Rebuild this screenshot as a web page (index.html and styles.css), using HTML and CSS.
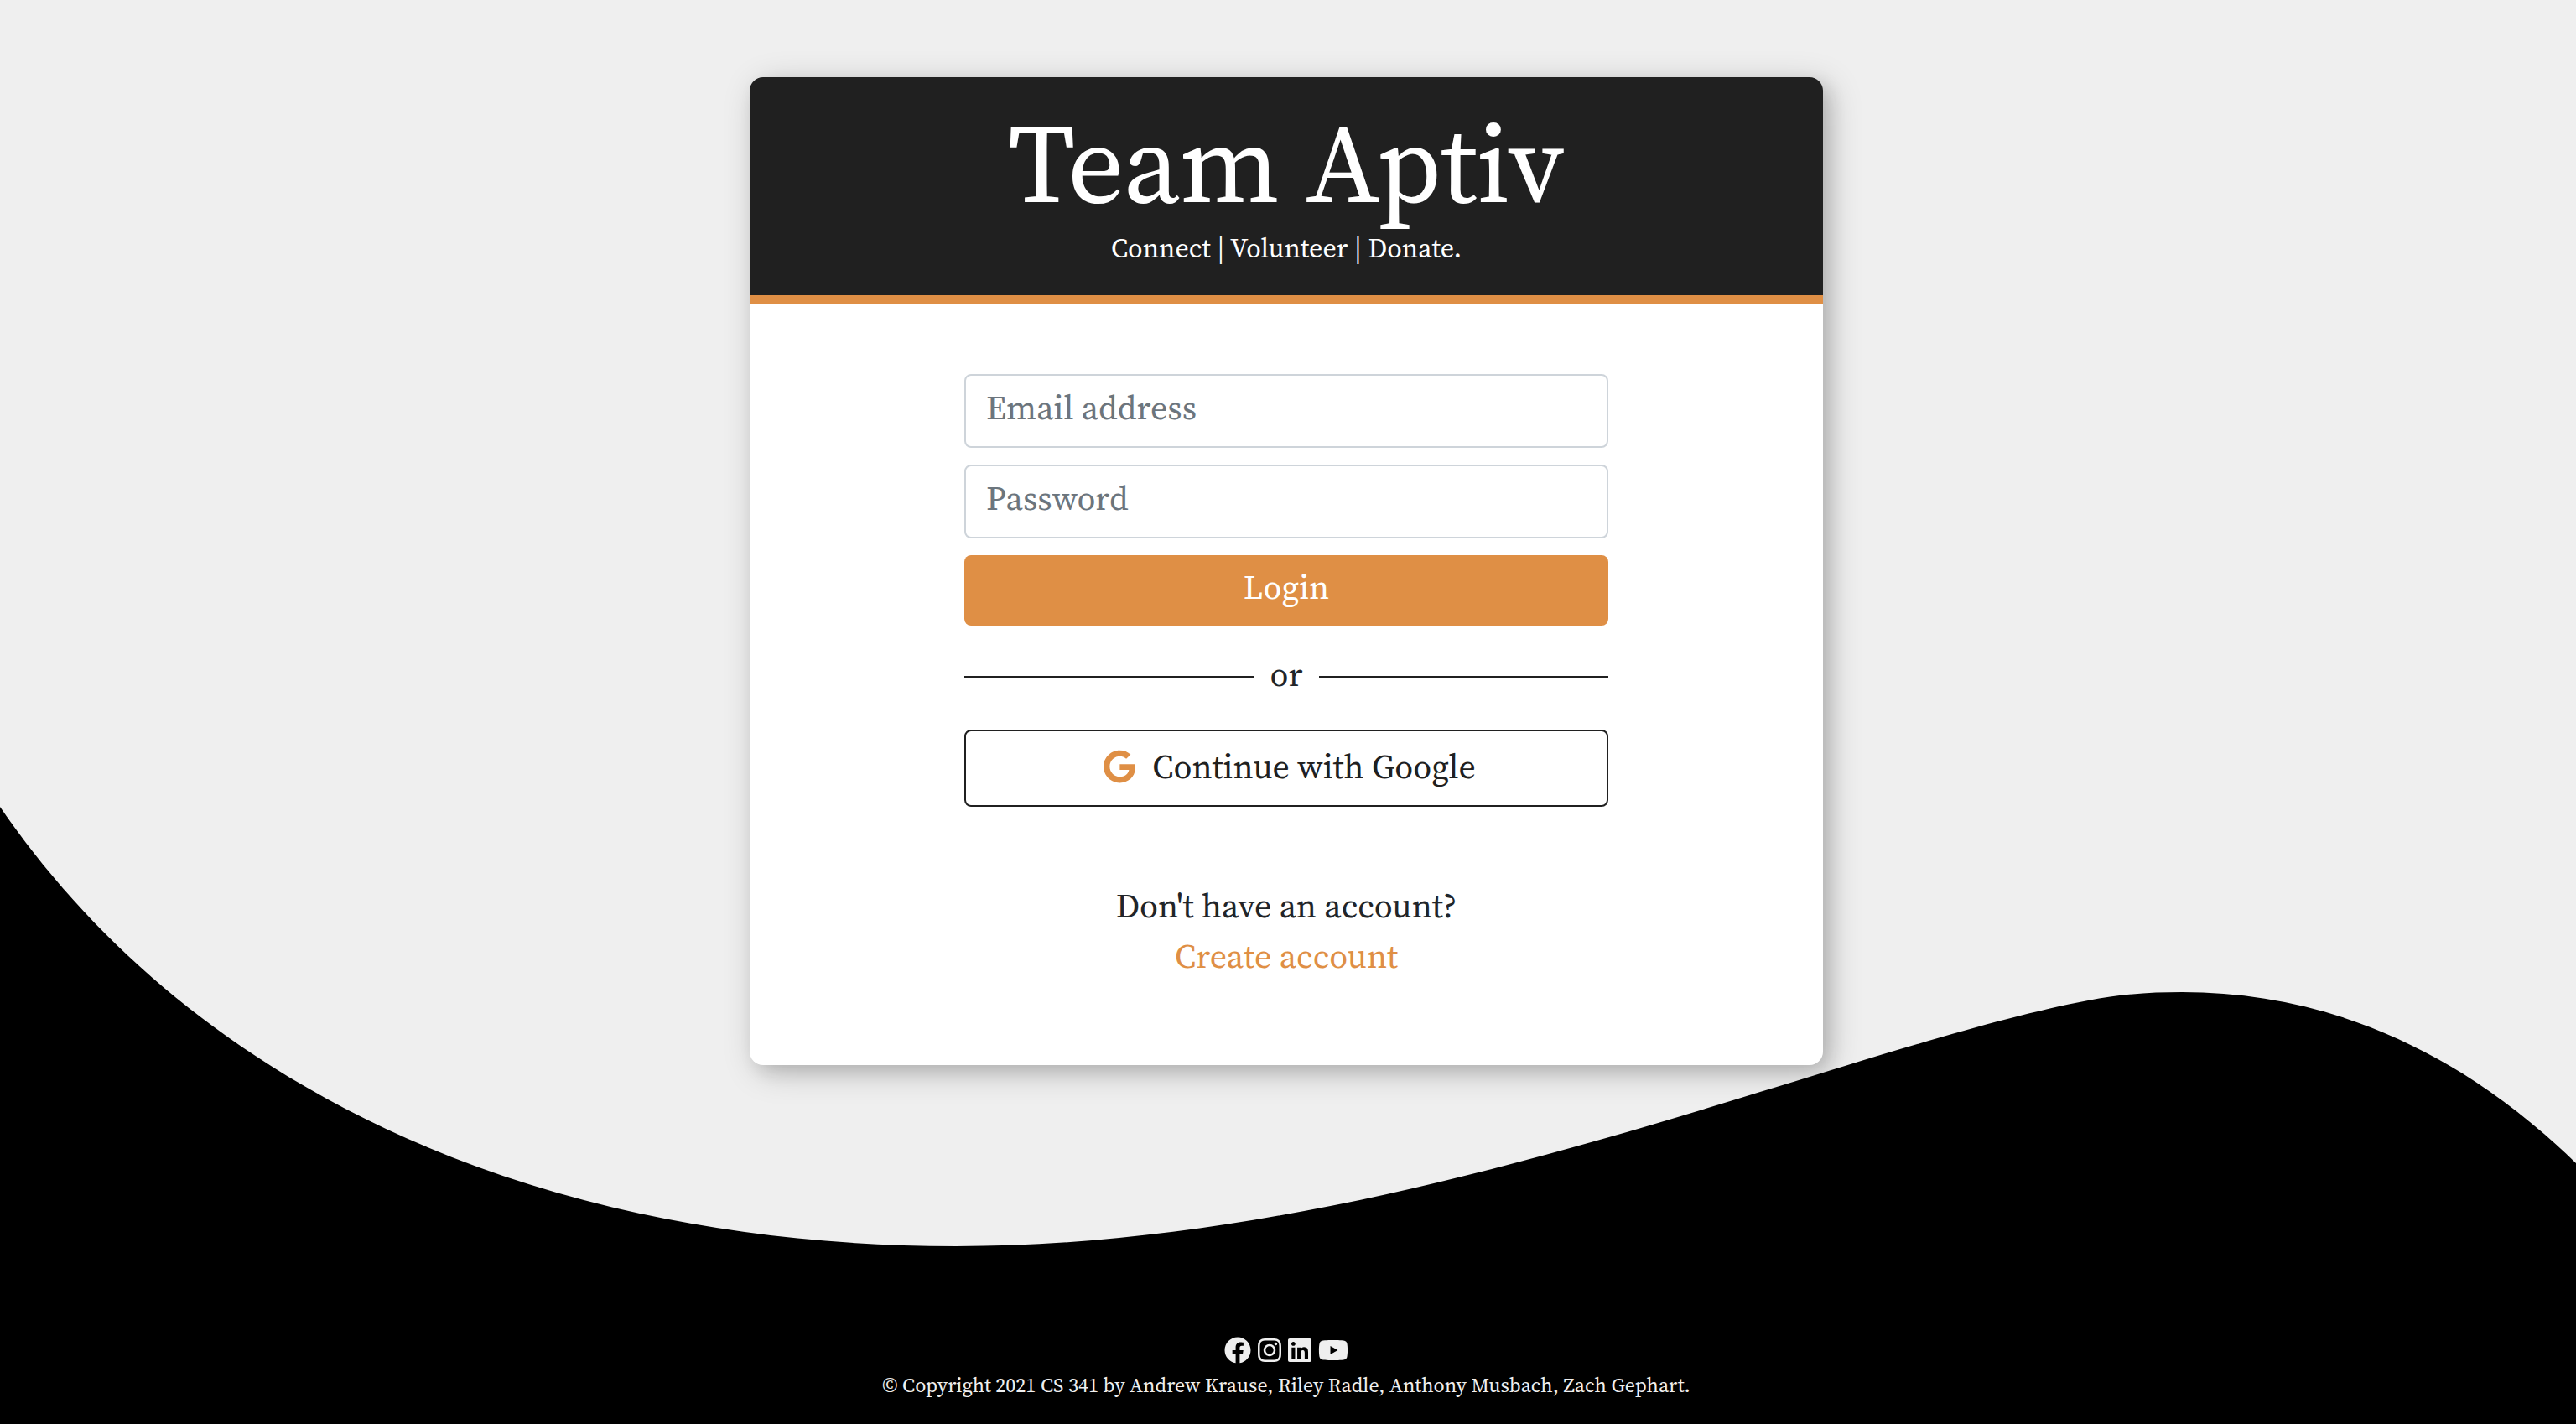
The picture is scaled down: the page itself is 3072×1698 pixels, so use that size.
FILE: index.html
```html
<!DOCTYPE html>
<html lang="en">
<head>
  <meta charset="utf-8">
  <meta name="viewport" content="width=device-width, initial-scale=1">
  <title>Team Aptiv</title>
  <link rel="stylesheet" href="styles.css">
</head>
<body>
  <svg class="wave" viewBox="0 948 3072 750" aria-hidden="true">
    <path d="M0 962C210 1269 597 1485 1140 1486C1670 1486 2190 1250 2490 1193C2530 1185 2565 1183 2602 1183C2774 1183 2932 1251 3072 1387V1698H0Z"/>
  </svg>

  <main class="card">
    <header class="card-header">
      <h1 class="brand">Team Aptiv</h1>
      <p class="tagline">Connect | Volunteer | Donate.</p>
    </header>

    <div class="card-body">
      <form class="login">
        <input class="field" type="email" placeholder="Email address" aria-label="Email address">
        <input class="field" type="password" placeholder="Password" aria-label="Password">
        <button class="btn btn-login" type="submit">Login</button>
      </form>

      <div class="divider"><span class="divider-text">or</span></div>

      <button class="btn btn-google" type="button">
        <svg class="google-icon" viewBox="0 0 488 512" aria-hidden="true"><path d="M488 261.800C488 403.300 391.100 504 248 504 110.800 504 0 393.200 0 256S110.800 8 248 8c66.800 0 123 24.500 166.300 64.900l-67.500 64.900C258.500 52.600 94.300 116.600 94.300 256c0 86.500 69.100 156.600 153.700 156.600 98.200 0 135-70.400 140.800-106.900H248v-85.300h236.100c2.300 12.700 3.900 24.900 3.900 41.400z"/></svg>
        <span>Continue with Google</span>
      </button>

      <div class="signup">
        <p class="signup-text">Don't have an account?</p>
        <a class="signup-link" href="#create">Create account</a>
      </div>
    </div>
  </main>

  <footer class="footer">
    <nav class="social" aria-label="Social media">
      <a href="#facebook" aria-label="Facebook"><svg viewBox="0 0 512 512"><path d="M504 256C504 119 393 8 256 8S8 119 8 256c0 123.780 90.690 226.380 209.250 245V327.690h-63V256h63v-54.640c0-62.150 37-96.480 93.670-96.480 27.140 0 55.520 4.840 55.520 4.840v61h-31.280c-30.800 0-40.410 19.120-40.410 38.730V256h68.780l-11 71.690h-57.780V501C413.310 482.380 504 379.780 504 256z"/></svg></a>
      <a href="#instagram" aria-label="Instagram"><svg viewBox="0 0 448 512"><path d="M224.100 141c-63.600 0-114.900 51.300-114.900 114.900s51.300 114.900 114.900 114.900S339 319.500 339 255.900 287.700 141 224.100 141zm0 189.600c-41.100 0-74.700-33.500-74.700-74.700s33.500-74.700 74.700-74.700 74.700 33.500 74.700 74.700-33.600 74.700-74.700 74.700zm146.400-194.300c0 14.900-12 26.800-26.800 26.800-14.900 0-26.800-12-26.800-26.800s12-26.800 26.800-26.800 26.800 12 26.800 26.800zm76.100 27.200c-1.700-35.900-9.900-67.700-36.200-93.900-26.200-26.200-58-34.400-93.900-36.200-37-2.100-147.900-2.100-184.900 0-35.800 1.700-67.600 9.900-93.900 36.100s-34.400 58-36.200 93.900c-2.100 37-2.100 147.900 0 184.900 1.700 35.900 9.900 67.700 36.200 93.900s58 34.400 93.900 36.200c37 2.100 147.900 2.100 184.900 0 35.900-1.700 67.700-9.900 93.900-36.200 26.200-26.200 34.400-58 36.200-93.900 2.100-37 2.100-147.800 0-184.800zM398.800 388c-7.800 19.600-22.900 34.700-42.600 42.600-29.500 11.700-99.500 9-132.100 9s-102.700 2.600-132.100-9c-19.600-7.800-34.700-22.900-42.600-42.600-11.700-29.500-9-99.500-9-132.100s-2.600-102.700 9-132.100c7.800-19.600 22.900-34.700 42.600-42.600 29.500-11.700 99.500-9 132.100-9s102.700-2.600 132.100 9c19.600 7.800 34.700 22.900 42.600 42.600 11.700 29.500 9 99.500 9 132.100s2.700 102.700-9 132.100z"/></svg></a>
      <a href="#linkedin" aria-label="LinkedIn"><svg viewBox="0 0 448 512"><path d="M416 32H31.900C14.300 32 0 46.500 0 64.300v383.400C0 465.500 14.300 480 31.900 480H416c17.600 0 32-14.500 32-32.300V64.300c0-17.800-14.400-32.300-32-32.300zM135.400 416H69V202.200h66.500V416zm-33.200-243c-21.300 0-38.500-17.300-38.500-38.500S80.900 96 102.200 96c21.200 0 38.500 17.300 38.500 38.500 0 21.300-17.200 38.500-38.500 38.500zm282.100 243h-66.400V312c0-24.800-.5-56.700-34.500-56.700-34.600 0-39.900 27-39.900 54.900V416h-66.400V202.200h63.700v29.200h.9c8.900-16.800 30.600-34.500 62.900-34.500 67.200 0 79.700 44.300 79.700 101.900V416z"/></svg></a>
      <a href="#youtube" aria-label="YouTube"><svg viewBox="0 0 576 512"><path d="M549.655 124.083c-6.281-23.650-24.787-42.276-48.284-48.597C458.781 64 288 64 288 64S117.220 64 74.629 75.486c-23.497 6.322-42.003 24.947-48.284 48.597-11.412 42.867-11.412 132.305-11.412 132.305s0 89.438 11.412 132.305c6.281 23.650 24.787 41.500 48.284 47.821C117.220 448 288 448 288 448s170.780 0 213.371-11.486c23.497-6.321 42.003-24.171 48.284-47.821 11.412-42.867 11.412-132.305 11.412-132.305s0-89.438-11.412-132.305zm-317.510 213.508V175.185l142.739 81.205-142.739 81.201z"/></svg></a>
    </nav>
    <p class="copyright">© Copyright 2021 CS 341 by Andrew Krause, Riley Radle, Anthony Musbach, Zach Gephart.</p>
  </footer>
</body>
</html>
```
FILE: styles.css
```css
:root {
  --accent: #df8f45;
  --dark: #202020;
  --light: #efefef;
  --text: #212529;
}

* {
  box-sizing: border-box;
}

body {
  position: relative;
  display: flex;
  flex-direction: column;
  align-items: center;
  min-height: 100vh;
  margin: 0;
  padding: 92px 4px 28px 0;
  background: var(--light);
  color: var(--text);
  font-family: "Source Serif Pro", "Source Serif 4", "Liberation Serif", serif;
  font-size: 40px;
  line-height: 60px;
}

h1,
p {
  margin: 0;
}

/* Decorative background */
.wave {
  position: absolute;
  z-index: -1;
  bottom: 0;
  left: 0;
  display: block;
  width: 100%;
}

/* Card */
.card {
  width: 100%;
  max-width: 1280px;
  overflow: hidden;
  border-radius: 16px;
  background: #fff;
  box-shadow: 8px 8px 20px rgba(0, 0, 0, .12), 8px 8px 40px rgba(0, 0, 0, .2);
  text-align: center;
}

.card-header {
  padding: 26px 32px 32px;
  border-bottom: 10px solid var(--accent);
  background: var(--dark);
  color: #fff;
}

.brand {
  font-size: 133px;
  font-weight: 400;
  line-height: 154px;
}

.tagline {
  font-size: 32px;
  line-height: 48px;
}

.card-body {
  display: flex;
  flex-direction: column;
  width: 60%;
  margin: 0 auto;
  padding: 84px 0 100px;
}

/* Form */
.login {
  display: flex;
  flex-direction: column;
  gap: 20px;
}

.field,
.btn {
  width: 100%;
  border-radius: 8px;
  font: inherit;
}

.field {
  padding: 8px 24px 16px;
  border: 2px solid #ced4da;
  background: #fff;
  color: var(--text);
}

.field::placeholder {
  color: #6c757d;
  opacity: 1;
}

.btn {
  cursor: pointer;
}

.btn-login {
  padding: 8px 24px 16px;
  border: 0;
  background: var(--accent);
  color: #fff;
}

.divider {
  display: flex;
  align-items: center;
  gap: 20px;
  margin: 28px 0 30px;
}

.divider::before,
.divider::after {
  flex: 1;
  height: 2px;
  background: var(--dark);
  content: "";
}

.divider-text {
  padding-bottom: 6px;
}

.btn-google {
  display: flex;
  align-items: center;
  justify-content: center;
  gap: 20px;
  padding: 12px 16px 16px 24px;
  border: 2px solid var(--dark);
  background: #fff;
  color: var(--dark);
}

.google-icon {
  height: 40px;
  fill: var(--accent);
}

.signup {
  margin-top: 88px;
}

.signup-link {
  color: var(--accent);
  text-decoration: none;
}

/* Footer */
.footer {
  margin-top: auto;
  color: var(--light);
  text-align: center;
}

.social {
  display: flex;
  justify-content: center;
  gap: 8px;
  margin-bottom: 8px;
}

.social svg {
  display: block;
  height: 32px;
  fill: currentColor;
}

.social a {
  color: inherit;
}

.copyright {
  font-size: 24px;
  line-height: 36px;
}
```
